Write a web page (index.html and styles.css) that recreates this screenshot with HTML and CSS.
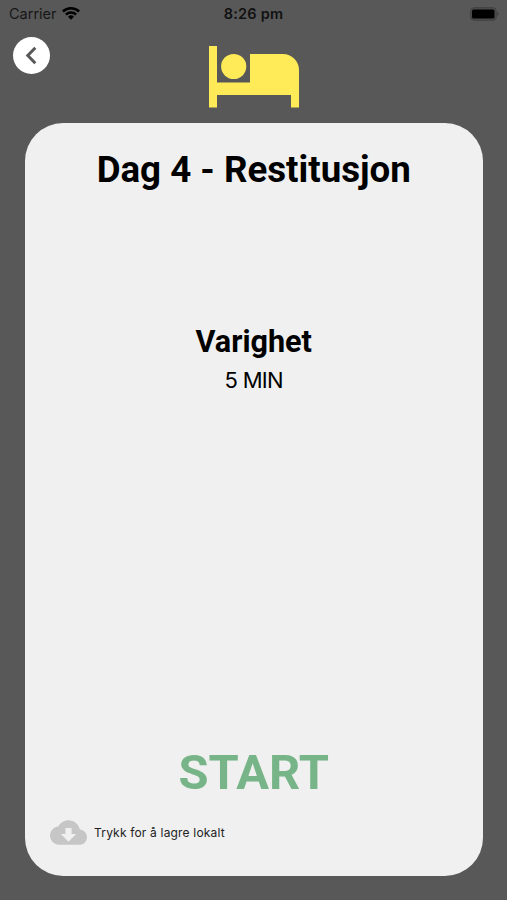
FILE: index.html
```html
<!DOCTYPE html>
<html lang="no">
<head>
<meta charset="utf-8">
<title>Dag 4 - Restitusjon</title>
<link rel="stylesheet" href="styles.css">
</head>
<body>
<div class="status">
  <div class="carrier"><span>Carrier</span>
    <svg class="wifi" viewBox="0 0 18 14"><path d="M0 4.6a12.8 12.8 0 0 1 18 0L16.2 6.5a10.2 10.2 0 0 0-14.4 0zM3 7.7a8.5 8.5 0 0 1 12 0L13.200 9.500a6 6 0 0 0-8.400 0zM6 10.700a4.300 4.300 0 0 1 6 0L9 13.800z"/></svg>
  </div>
  <div class="time">8:26 pm</div>
  <svg class="battery" viewBox="0 0 30 14"><rect x=".7" y=".7" width="25.600" height="12.600" rx="3.500" fill="#4d4d4d" stroke="#404040"/><rect x="2" y="2.500" width="22.500" height="9" rx="1.500"/><path d="M27.500 4.800q2.400 2.200 0 4.400z" fill="#3c3c3c"/></svg>
</div>
<header class="header">
  <button class="back" aria-label="Tilbake"><svg viewBox="0 0 37 37"><path d="M22.300 10.800 14.800 18.500 22.300 26.200"/></svg></button>
  <svg class="bed" viewBox="0 0 92 62"><path d="M1 0h8v36.500h33V8h33a16 16 0 0 1 16 16v37.500h-8V49H9v12.500H1z"/><circle cx="25.700" cy="20.500" r="12.600"/></svg>
</header>
<main class="card">
  <h1>Dag 4 - Restitusjon</h1>
  <section class="duration">
    <h2>Varighet</h2>
    <p>5 MIN</p>
  </section>
  <button class="start">START</button>
  <div class="save">
    <svg viewBox="0 0 24 24"><path d="M19.350 10.040C18.670 6.590 15.640 4 12 4 9.110 4 6.600 5.640 5.350 8.040 2.340 8.360 0 10.910 0 14c0 3.310 2.690 6 6 6h13c2.760 0 5-2.240 5-5 0-2.640-2.050-4.780-4.650-4.960zM17 13l-5 5-5-5h3V9h4v4h3z"/></svg>
    <span>Trykk for å lagre lokalt</span>
  </div>
</main>
</body>
</html>
```
FILE: styles.css
```css
* { box-sizing: border-box; }
body {
  margin: 0;
  width: 507px;
  height: 900px;
  display: flex;
  flex-direction: column;
  overflow: hidden;
  background: #585858;
  color: #000;
  font-family: Roboto, sans-serif;
  white-space: nowrap;
}
button { border: 0; padding: 0; font: inherit; }
svg { display: block; }
.status {
  height: 28px;
  padding: 0 7px 0 9px;
  display: grid;
  grid-template-columns: 1fr auto 1fr;
  align-items: center;
  font: 14.500px/28px Inter, sans-serif;
}
.carrier { display: flex; align-items: center; gap: 6px; color: #171717; }
.wifi { width: 18px; height: 14px; margin: -2px 0 0 -1px; }
.time { margin-right: 2px; font-weight: 600; letter-spacing: .2px; color: #111; }
.battery { width: 30px; height: 14px; margin-top: -1px; justify-self: end; }
.header {
  height: 95px;
  padding: 9px 13px 0;
  display: grid;
  grid-template-columns: 37px 1fr 37px;
  align-items: start;
}
.back { width: 37px; height: 37px; border-radius: 50%; background: #fff; }
.back path { fill: none; stroke: #585858; stroke-width: 3; }
.bed { width: 92px; height: 62px; margin-top: 9px; justify-self: center; fill: #ffeb57; }
.card {
  width: 457.500px;
  height: 752.500px;
  margin-left: 25px;
  padding-top: 25px;
  border-radius: 38px;
  background: #f0f0f0;
  display: flex;
  flex-direction: column;
  align-items: center;
}
h1 { margin: 0; font-size: 36.700px; line-height: 44px; font-weight: 700; }
.duration { margin-top: 132px; text-align: center; }
h2 { margin: 0; font-size: 30.600px; line-height: 36px; font-weight: 700; }
.duration p { margin: 6px 0 0; font: 22px/28px Inter, sans-serif; letter-spacing: -.7px; }
.start {
  margin-top: auto;
  background: none;
  color: #77b588;
  font-size: 48.800px;
  font-weight: 700;
  line-height: 60px;
}
.save {
  align-self: flex-start;
  display: flex;
  align-items: center;
  gap: 7px;
  height: 37px;
  margin: 11px 0 24.500px 25px;
  color: #222;
  font: 12px/20px Inter, sans-serif;
  letter-spacing: .18px;
}
.save svg { width: 37px; height: 37px; fill: #c6c6c6; }
.save span { padding-top: 1px; }
```
